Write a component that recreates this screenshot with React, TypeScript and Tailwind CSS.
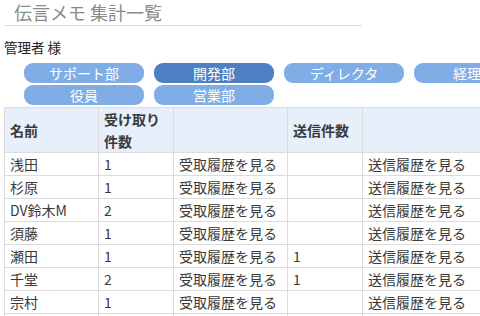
const departments = [
  { name: 'サポート部', active: false },
  { name: '開発部', active: true },
  { name: 'ディレクタ', active: false },
  { name: '経理部', active: false },
  { name: '役員', active: false },
  { name: '営業部', active: false },
];

const rows = [
  { name: '浅田', received: '1', sent: '' },
  { name: '杉原', received: '1', sent: '' },
  { name: 'DV鈴木M', received: '2', sent: '' },
  { name: '須藤', received: '1', sent: '' },
  { name: '瀬田', received: '1', sent: '1' },
  { name: '千堂', received: '2', sent: '1' },
  { name: '宗村', received: '1', sent: '' },
  { name: '', received: '', sent: '' },
];

export default function App() {
  return (
    <div
      className="w-[480px] h-[316px] overflow-hidden bg-white text-[#3a3a3a] pl-[4px]"
      style={{ fontFamily: '"Noto Sans CJK JP", "Noto Sans", sans-serif' }}
    >
      {/* タイトル */}
      <div className="w-[358px] h-[26px] border-b border-[#dcdcdc] pl-[10px] text-[18px] leading-[24px] text-[#8a8a8a]">
        伝言メモ 集計一覧
      </div>

      <div className="mt-[12px] text-[13.5px] leading-[18px] text-[#222]">管理者 様</div>

      {/* 部署ボタン */}
      <div className="mt-[7px] w-[560px] flex flex-wrap gap-x-[10px] gap-y-[2px] pl-[20px]">
        {departments.map((d) => (
          <button
            key={d.name}
            className={`w-[120px] h-[20px] rounded-[9px] text-[14px] leading-[20px] text-white text-center ${
              d.active ? 'bg-[#4d80c3]' : 'bg-[#80ade6]'
            }`}
          >
            {d.name}
          </button>
        ))}
      </div>

      {/* 集計テーブル */}
      <table className="mt-[2px] border-collapse table-fixed w-[600px] text-[14px]">
        <colgroup>
          <col className="w-[94px]" />
          <col className="w-[75px]" />
          <col className="w-[114px]" />
          <col className="w-[75px]" />
          <col className="w-[136px]" />
          <col className="w-[106px]" />
        </colgroup>
        <thead>
          <tr className="bg-[#e7effb] h-[44px]">
            <th className="border border-[#dcdcdc] px-[5px] text-left font-bold leading-[22px]">名前</th>
            <th className="border border-[#dcdcdc] px-[5px] text-left font-bold leading-[22px]">
              受け取り
              <br />
              件数
            </th>
            <th className="border border-[#dcdcdc] px-[5px]"></th>
            <th className="border border-[#dcdcdc] px-[5px] text-left font-bold leading-[22px]">送信件数</th>
            <th className="border border-[#dcdcdc] px-[5px]"></th>
            <th className="border border-[#dcdcdc] px-[5px]"></th>
          </tr>
        </thead>
        <tbody>
          {rows.map((r, i) => (
            <tr key={i} className="h-[23px]">
              <td className="border border-[#dcdcdc] px-[5px] py-0 leading-[21px] whitespace-nowrap">{r.name}</td>
              <td className="border border-[#dcdcdc] px-[5px] py-0 leading-[21px]">{r.received}</td>
              <td className="border border-[#dcdcdc] px-[5px] py-0 leading-[21px] whitespace-nowrap">
                {r.name && '受取履歴を見る'}
              </td>
              <td className="border border-[#dcdcdc] px-[5px] py-0 leading-[21px]">{r.sent}</td>
              <td className="border border-[#dcdcdc] px-[5px] py-0 leading-[21px] whitespace-nowrap">
                {r.name && '送信履歴を見る'}
              </td>
              <td className="border border-[#dcdcdc] px-[5px] py-0 leading-[21px]"></td>
            </tr>
          ))}
        </tbody>
      </table>
    </div>
  );
}
